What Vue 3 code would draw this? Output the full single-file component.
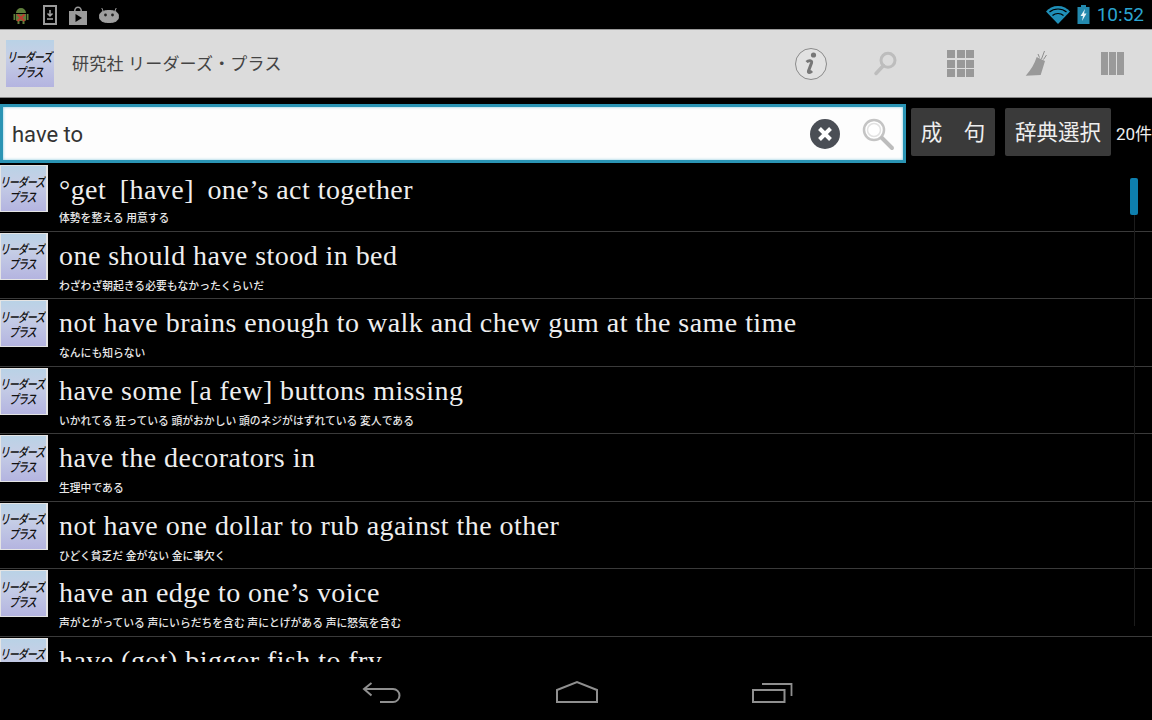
<script setup>
const rows = [
  { title: '°get\u2009 [have] \u2009one’s act together', sub: '体勢を整える 用意する' },
  { title: 'one should have stood in bed', sub: 'わざわざ朝起きる必要もなかったくらいだ' },
  { title: 'not have brains enough to walk and chew gum at the same time', sub: 'なんにも知らない' },
  { title: 'have some [a few] buttons missing', sub: 'いかれてる 狂っている 頭がおかしい 頭のネジがはずれている 変人である' },
  { title: 'have the decorators in', sub: '生理中である' },
  { title: 'not have one dollar to rub against the other', sub: 'ひどく貧乏だ 金がない 金に事欠く' },
  { title: 'have an edge to one’s voice', sub: '声がとがっている 声にいらだちを含む 声にとげがある 声に怒気を含む' },
  { title: 'have (got) bigger fish to fry', sub: '' }
]
</script>

<template>
  <div class="screen">
    <div class="status">
      <div class="status__left">
        <svg width="20" height="20" viewBox="0 0 20 20">
          <path d="M5 8a5 5 0 0 1 10 0zM5 9h10v6a1 1 0 0 1-1 1H6a1 1 0 0 1-1-1zM2.500 9h1.800v6H2.500zM15.700 9h1.800v6h-1.800zM6.500 16h2v3h-2zM11.500 16h2v3h-2z" fill="#5f7f3c" />
          <path d="M6.500 9.500l7 6.500M13.500 9.500l-7 6.500" stroke="#c23a30" stroke-width="1.800" />
        </svg>
        <svg width="14" height="20" viewBox="0 0 14 20">
          <path d="M1 1h12v18H1z" fill="none" stroke="#9a9a9a" stroke-width="2" />
          <path d="M7 5v5.500M4.500 8.500L7 11l2.500-2.500M4 14h6" fill="none" stroke="#a8a8a8" stroke-width="1.500" />
        </svg>
        <svg width="18" height="20" viewBox="0 0 18 20">
          <path d="M0 6h18v14H0zM5 6a4 4.500 0 0 1 8 0h-1.500a2.500 3 0 0 0-5 0z" fill="#9a9a9a" />
          <path d="M6.500 9l6.500 4-6.500 4z" fill="#000" />
        </svg>
        <svg width="20" height="16" viewBox="0 0 20 16">
          <path d="M0.500 9.500c0-4 3-6 9.500-6s9.500 2 9.500 6-3 6-9.500 6-9.500-2-9.500-6zM4 4L2.800 1M16 4l1.200-3" fill="#a0a0a0" stroke="#a0a0a0" />
          <circle cx="6.500" cy="8" r="1.400" fill="#222" />
          <circle cx="13.500" cy="8" r="1.400" fill="#222" />
        </svg>
      </div>
      <div class="status__right">
        <svg width="24" height="18" viewBox="0 0 24 18">
          <path d="M12 18L0 5.500C3 2 7 0 12 0s9 2 12 5.500z" fill="#1f8fb8" />
          <path d="M3.500 6C6 3.800 9 3 12 3s6 .8 8.500 3M6.500 9.500C8 8.200 10 7.500 12 7.500s4 .7 5.500 2" fill="none" stroke="#000" stroke-width="1.200" />
        </svg>
        <svg width="13" height="19" viewBox="0 0 13 19">
          <path d="M4 0h5v2h3.500v17H.500V2H4z" fill="#2389ae" />
          <path d="M8 4L3.500 11h2.500L5 16l4.500-7.500H7z" fill="#e8f4f8" />
        </svg>
        <span class="status__time">10:52</span>
      </div>
    </div>

    <div class="appbar">
      <div class="thumb thumb--large"><span>リーダーズ</span><span>プラス</span></div>
      <div class="appbar__title">研究社 リーダーズ・プラス</div>
      <div class="appbar__actions">
        <div class="action">
          <svg width="32" height="32" viewBox="0 0 32 32">
            <circle cx="16" cy="16" r="15.500" fill="#e2e2e2" stroke="#8a8a8a" stroke-width="1" />
            <circle cx="18.500" cy="7" r="2.600" fill="#777" />
            <path d="M11.500 14c2-1.800 6-2 5 1l-3 8c-.5 2 1.500 2 3.500 0" fill="none" stroke="#777" stroke-width="3" />
          </svg>
        </div>
        <div class="action">
          <svg width="28" height="28" viewBox="0 0 28 28">
            <circle cx="15" cy="10.300" r="7" fill="none" stroke="#bdbdbd" stroke-width="3" />
            <path d="M10.500 15.500L3 23.500" stroke="#bdbdbd" stroke-width="3.500" stroke-linecap="round" />
          </svg>
        </div>
        <div class="action">
          <div class="grid9"><i v-for="n in 9" :key="n"></i></div>
        </div>
        <div class="action">
          <svg width="24" height="28" viewBox="0 0 24 28">
            <path d="M11.700 7l8.300 4-4.300 14-15 .7C6 20 9.500 14 11.700 7z" fill="#999" />
            <path d="M16.500 9L19.500 1M18.500 9.500l3-4.500M14.500 7.500L13 4" stroke="#8c8c8c" stroke-width="1" />
          </svg>
        </div>
        <div class="action">
          <div class="cols3"><i></i><i></i><i></i></div>
        </div>
      </div>
    </div>

    <div class="searchrow">
      <div class="search">
        <span class="search__text">have to</span>
        <svg class="search__clear" width="32" height="32" viewBox="0 0 32 32">
          <circle cx="16" cy="16" r="15" fill="#4a4e55" />
          <path d="M10.500 10.500l11 11M21.500 10.500l-11 11" stroke="#fff" stroke-width="4" />
        </svg>
        <svg width="34" height="34" viewBox="0 0 34 34">
          <circle cx="13" cy="13" r="10" fill="#fff" stroke="#c4c4c4" stroke-width="2.500" />
          <circle cx="13" cy="13" r="6.500" fill="none" stroke="#e2e2e2" stroke-width="1.500" />
          <path d="M21 21l10 10" stroke="#bcbcbc" stroke-width="4" stroke-linecap="round" />
        </svg>
      </div>
      <button class="btn btn--idiom">成　句</button>
      <button class="btn btn--dict">辞典選択</button>
      <span class="count">20件</span>
    </div>

    <div class="list">
      <div v-for="(row, i) in rows" :key="i" class="row">
        <div class="thumb"><span>リーダーズ</span><span>プラス</span></div>
        <div class="row__body">
          <div class="row__title">{{ row.title }}</div>
          <div class="row__sub">{{ row.sub }}</div>
        </div>
      </div>
      <div class="scrolltrack"></div>
      <div class="scrollthumb"></div>
    </div>

    <div class="navbar">
      <svg width="40" height="21" viewBox="0 0 40 21">
        <path d="M9.500 1L2 7l7.500 6.500M2 7h29a6.500 6.500 0 0 1 0 13H18" fill="none" stroke="#8f8f8f" stroke-width="2" />
      </svg>
      <svg width="44" height="23" viewBox="0 0 44 23">
        <path d="M2 22V10L22 2l20 8v12z" fill="none" stroke="#8f8f8f" stroke-width="2" />
      </svg>
      <svg width="41" height="21" viewBox="0 0 41 21">
        <path d="M1 8h31.500v12H1z" fill="none" stroke="#8f8f8f" stroke-width="2" />
        <path d="M10 2h29.500v12" fill="none" stroke="#8f8f8f" stroke-width="1.800" />
      </svg>
    </div>
  </div>
</template>

<style>
  html, body {
    margin: 0;
    background: #000;
  }
</style>

<style scoped>
  .screen {
    width: 1152px;
    height: 720px;
    display: flex;
    flex-direction: column;
    overflow: hidden;
    background: #000;
    font-family: "Roboto", "Noto Sans CJK JP", sans-serif;
  }

  .status {
    height: 29px;
    flex: none;
    display: flex;
    justify-content: space-between;
    align-items: center;
  }

  .status__left {
    display: flex;
    align-items: center;
    gap: 12px;
    padding-left: 11px;
  }

  .status__right {
    display: flex;
    align-items: center;
    gap: 7px;
    padding-right: 8px;
  }

  .status__time {
    color: #2ba5d1;
    font-size: 19px;
  }

  .appbar {
    height: 67px;
    flex: none;
    display: flex;
    align-items: center;
    background: #dcdcdc;
    border-top: 1px solid #9a9a9a;
    border-bottom: 1px solid #888;
    padding-left: 6px;
  }

  .appbar__title {
    margin: 0 0 2px 18px;
    font-size: 17px;
    letter-spacing: 0.200px;
    color: #444;
  }

  .appbar__actions {
    margin-left: auto;
    display: flex;
    padding-right: 2px;
  }

  .action {
    width: 75.250px;
    display: flex;
    justify-content: center;
    align-items: center;
  }

  .grid9 {
    display: grid;
    grid-template-columns: repeat(3, 8px);
    grid-auto-rows: 8px;
    gap: 1.500px;
    margin-right: 2px;
  }

  .grid9 i {
    background: #999;
  }

  .cols3 {
    display: flex;
    gap: 1px;
  }

  .cols3 i {
    width: 7px;
    height: 23px;
    background: #9a9a9a;
  }

  .thumb {
    width: 48px;
    height: 47px;
    flex: none;
    box-sizing: border-box;
    display: flex;
    flex-direction: column;
    align-items: center;
    justify-content: center;
    background: linear-gradient(180deg, #b9d2e6 0%, #c6cfe6 35%, #b4b4e0 100%);
    border: 1px solid #e4e4e4;
    border-right-width: 2px;
    color: #111;
    font-size: 10px;
    font-weight: 500;
    line-height: 15px;
    font-family: "Noto Sans CJK JP", sans-serif;
    letter-spacing: -1px;
    overflow: hidden;
  }

  .thumb span {
    transform: skewX(-12deg) scaleY(1.300);
  }

  .thumb--large {
    border: none;
  }

  .searchrow {
    height: 66px;
    flex: none;
    display: flex;
    align-items: flex-start;
  }

  .search {
    width: 906px;
    height: 59px;
    box-sizing: border-box;
    flex: none;
    display: flex;
    align-items: center;
    padding: 0 8px 0 9px;
    background: #fdfdfd;
    border: 3px solid #2a94b4;
    box-shadow: inset 0 0 3px #7cc3da;
    margin-top: 6px;
  }

  .search__text {
    flex: 1;
    font-size: 22px;
    line-height: 26px;
    margin-top: 2px;
    color: #333;
  }

  .search__clear {
    margin-right: 20px;
  }

  .btn {
    height: 48px;
    margin: 10px 0 0 5px;
    padding: 0 0 4px;
    flex: none;
    background: #3a3a3a;
    border: none;
    border-radius: 2px;
    color: #eee;
    font-family: "Noto Sans CJK JP", sans-serif;
    font-size: 21.500px;
  }

  .btn--idiom {
    width: 84px;
  }

  .btn--dict {
    width: 106px;
    margin-left: 10px;
  }

  .count {
    margin: 26px 0 0 5px;
    font-size: 17px;
    line-height: 20px;
    color: #eee;
    white-space: nowrap;
  }

  .list {
    position: relative;
    flex: 1;
    overflow: hidden;
  }

  .row {
    height: 67.500px;
    box-sizing: border-box;
    display: flex;
    align-items: flex-start;
    border-bottom: 1px solid #3a3a3a;
  }

  .row .thumb {
    margin-top: 1px;
  }

  .row__body {
    margin-left: 11px;
    padding-top: 5px;
  }

  .row__title {
    height: 38px;
    line-height: 38px;
    font-family: "Liberation Serif", serif;
    font-size: 28px;
    letter-spacing: 0.450px;
    color: #eee;
    white-space: nowrap;
  }

  .row:first-child .row__title {
    line-height: 42px;
  }

  .row__sub {
    margin-top: 5px;
    font-size: 10.800px;
    font-weight: 500;
    line-height: 14px;
    color: #e8e8e8;
    white-space: nowrap;
  }

  .scrolltrack {
    position: absolute;
    left: 1134px;
    top: 50px;
    width: 1px;
    height: 412px;
    background: #1c1c1c;
  }

  .scrollthumb {
    position: absolute;
    left: 1130px;
    top: 14px;
    width: 8px;
    height: 37px;
    border-radius: 2px;
    background: #0e7fae;
  }

  .navbar {
    height: 58px;
    box-sizing: border-box;
    flex: none;
    display: flex;
    align-items: flex-end;
    justify-content: center;
    gap: 153px;
    padding: 0 0 17px 3px;
  }
</style>
